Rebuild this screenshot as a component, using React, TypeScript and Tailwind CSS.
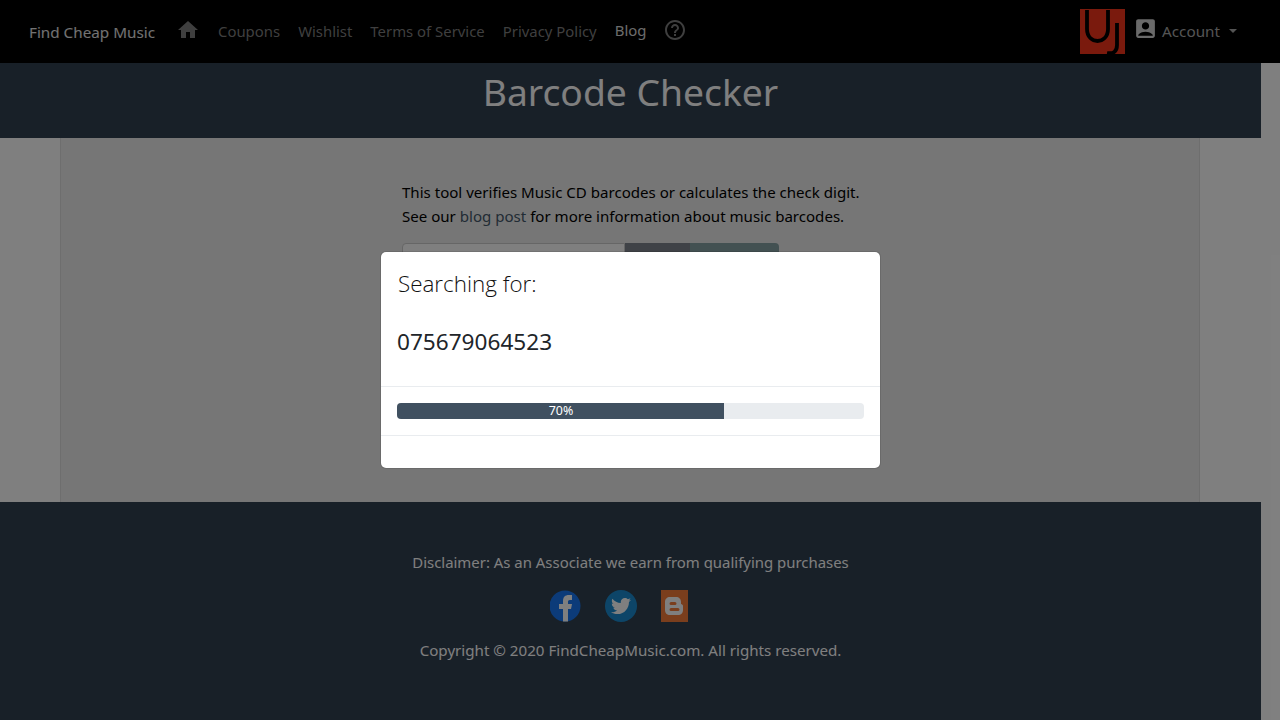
import { MdHome, MdHelpOutline, MdAccountBox } from "react-icons/md";
import { FaTwitter } from "react-icons/fa";

function NavLink({ children, bright }: { children: React.ReactNode; bright?: boolean }) {
  return (
    <a className={bright ? "text-[#d8d8d8] text-[14.9px]" : "mt-[2px] text-[#7e7e7e] text-[14.9px]"}>{children}</a>
  );
}

export default function App() {
  return (
    <div className="relative h-[720px] w-[1280px] overflow-hidden bg-white text-[#111] font-['Noto_Sans',sans-serif]">
      <div className="w-[1261px]">
        <nav className="flex h-[63px] w-[1280px] items-center bg-black pl-[29px] pr-[43px]">
          <a className="mt-[1px] mr-[21px] text-[15.25px] text-[#fff]/90">Find Cheap Music</a>
          <div className="mb-[3px] flex items-center gap-[18px]">
            <MdHome className="h-[24px] w-[24px] text-[#7e7e7e]" />
            <NavLink>Coupons</NavLink>
            <NavLink>Wishlist</NavLink>
            <NavLink>Terms of Service</NavLink>
            <NavLink>Privacy Policy</NavLink>
            <NavLink bright>Blog</NavLink>
            <MdHelpOutline className="ml-[-1px] h-[24px] w-[24px] text-[#7e7e7e]" />
          </div>
          <div className="ml-auto flex items-center">
            <svg width="45" height="45" viewBox="0 0 45 45" className="mr-[8px]">
              <rect width="45" height="45" fill="#f4341a" />
              <path d="M7 1v19c0 16 21 16 21 0V1" fill="none" stroke="#000" strokeWidth="3.800" />
              <path d="M37 14v22c0 7-4 9-10 8" fill="none" stroke="#000" strokeWidth="3.800" />
            </svg>
            <MdAccountBox className="mb-[6px] h-[25px] w-[25px] text-[#d4d4d4]" />
            <span className="ml-[4px] text-[15.25px] text-[#a8a8a8]">Account</span>
            <span className="mb-[1px] ml-[9px] h-0 w-0 border-x-[4px] border-t-[4px] border-x-transparent border-t-[#a8a8a8]" />
          </div>
        </nav>
        <header className="flex h-[75px] items-center justify-center bg-[#304050]">
          <h1 className="mb-[17px] text-[37.25px] leading-none text-[#fff]">Barcode Checker</h1>
        </header>
        <main className="pl-[60px] pr-[61px]">
          <div className="h-[364px] border-x border-[#ddd] bg-[#ececec] pl-[341px] pt-[42px] text-[15.07px] leading-[24px] text-black">
            <p>This tool verifies Music CD barcodes or calculates the check digit.</p>
            <p>
              See our <a className="text-[#44586a]">blog post</a> for more information about music barcodes.
            </p>
            <div className="mt-[15px] flex h-[38px] w-[377px]">
              <div className="w-[223px] rounded-l border border-[#ccc] bg-white" />
              <div className="w-[65px] bg-[#7e848e]" />
              <div className="w-[89px] rounded-r bg-[#86a2a4]" />
            </div>
          </div>
        </main>
        <footer className="flex h-[218px] flex-col items-center bg-[#304050] pt-[48px] text-[#fff]">
          <p className="text-[14.93px] leading-[24px]">Disclaimer: As an Associate we earn from qualifying purchases</p>
          <div className="mt-[16px] mr-[23px] flex h-[32px] items-center">
            <svg width="32" height="32" viewBox="0 0 32 32" className="mr-[23px]">
              <circle cx="15" cy="16" r="15.500" fill="#1877f2" />
              <path d="M13 31.500V19H9v-5h4v-3c0-4 2-6 6-6h3v5h-2c-2 0-2 1-2 2v2h4l-1 5h-3v12.500z" fill="#fff" />
            </svg>
            <div className="mr-[24px] flex h-[32px] w-[32px] items-center justify-center rounded-full bg-[#1a8bd0]">
              <FaTwitter className="h-[20px] w-[20px] text-white" />
            </div>
            <svg width="27" height="32" viewBox="0 0 27 32">
              <rect width="27" height="32" fill="#f57d3b" />
              <path
                fillRule="evenodd"
                d="M9 7h6c3 0 5 2 5 5v2c1 0 2 1 2 2v4c0 3-2 5-5 5H9c-3 0-5-2-5-5v-8c0-3 2-5 5-5zm1 5a1.500 1.500 0 0 0 0 3h4a1.500 1.500 0 0 0 0-3zm0 6a1.500 1.500 0 0 0 0 3h7a1.500 1.500 0 0 0 0-3z"
                fill="#fff"
              />
            </svg>
          </div>
          <p className="mt-[16px] text-[15.15px] leading-[24px]">Copyright © 2020 FindCheapMusic.com. All rights reserved.</p>
        </footer>
      </div>
      <div className="absolute inset-0 bg-black/50" />
      <div className="absolute left-[380px] top-[251px] w-[501px] rounded-[6px] border border-black/10 bg-white bg-clip-padding text-[#212529]">
        <div className="h-[135px] border-b border-[#e9ecef] px-[16px] pt-[16px]">
          <h5 className="pl-[1px] font-['Open_Sans',sans-serif] text-[22.4px] font-light leading-[32px] text-[#111]">Searching for:</h5>
          <p className="mt-[26px] text-[22.6px] leading-[32px]">075679064523</p>
        </div>
        <div className="h-[49px] border-b border-[#e9ecef] px-[16px] pt-[16px]">
          <div className="flex h-[16px] overflow-hidden rounded-[4px] bg-[#e9ecef]">
            <div className="flex w-[70%] items-center justify-center bg-[#405060] pl-[1px] text-[12.4px] text-white">70%</div>
          </div>
        </div>
        <div className="h-[32px]" />
      </div>
    </div>
  );
}
